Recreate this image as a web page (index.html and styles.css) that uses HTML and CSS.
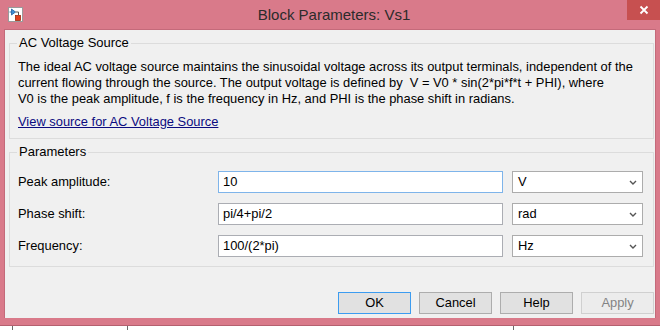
FILE: index.html
```html
<!DOCTYPE html>
<html>
<head>
<meta charset="utf-8">
<title>Block Parameters: Vs1</title>
<link rel="stylesheet" href="styles.css">
</head>
<body>
<div class="window">
  <div class="titlebar">
    <div class="tb-left">
      <svg class="app-icon" width="15" height="15" viewBox="0 0 15 15">
        <rect x="0.5" y="0.5" width="14" height="14" fill="#ffffff" stroke="#9a9a9a"/>
        <line x1="1.5" y1="5" x2="3.5" y2="5" stroke="#2a6fb8" stroke-width="1"/>
        <polygon points="3.5,2 7.5,5 3.5,8" fill="#3d8fd6" stroke="#1f5f9f" stroke-width="0.8"/>
        <polyline points="7.5,5 10.5,5 10.5,8" fill="none" stroke="#555" stroke-width="1"/>
        <rect x="7.5" y="8.5" width="5" height="5" fill="#e0401f" stroke="#a02a10" stroke-width="0.8"/>
      </svg>
    </div>
    <div class="title">Block Parameters: Vs1</div>
    <div class="tb-right">
      <div class="close">
        <svg width="10" height="10" viewBox="0 0 10 10"><path d="M1.5 1.5 L8.5 8.5 M8.5 1.5 L1.5 8.5" stroke="#ffffff" stroke-width="1.8"/></svg>
      </div>
    </div>
  </div>
  <div class="client">
    <fieldset class="group group-desc">
      <legend>AC Voltage Source</legend>
      <p class="desc">The ideal AC voltage source maintains the sinusoidal voltage across its output terminals, independent of the<br>current flowing through the source. The output voltage is defined by&nbsp; V = V0 * sin(2*pi*f*t + PHI), where<br>V0 is the peak amplitude, f is the frequency in Hz, and PHI is the phase shift in radians.</p>
      <a class="link" href="#">View source for AC Voltage Source</a>
    </fieldset>
    <fieldset class="group group-params">
      <legend>Parameters</legend>
      <div class="params">
        <label class="plabel">Peak amplitude:</label>
        <div class="field focused">10</div>
        <div class="combo"><span>V</span><svg class="chev" width="8" height="5" viewBox="0 0 8 5"><path d="M1 1 L4 4 L7 1" fill="none" stroke="#555" stroke-width="1.4"/></svg></div>

        <label class="plabel">Phase shift:</label>
        <div class="field">pi/4+pi/2</div>
        <div class="combo"><span>rad</span><svg class="chev" width="8" height="5" viewBox="0 0 8 5"><path d="M1 1 L4 4 L7 1" fill="none" stroke="#555" stroke-width="1.4"/></svg></div>

        <label class="plabel">Frequency:</label>
        <div class="field">100/(2*pi)</div>
        <div class="combo"><span>Hz</span><svg class="chev" width="8" height="5" viewBox="0 0 8 5"><path d="M1 1 L4 4 L7 1" fill="none" stroke="#555" stroke-width="1.4"/></svg></div>
      </div>
    </fieldset>
    <div class="buttons">
      <div class="btn btn-default">OK</div>
      <div class="btn">Cancel</div>
      <div class="btn">Help</div>
      <div class="btn btn-disabled">Apply</div>
    </div>
  </div>
</div>
<div class="below">
  <div class="seg seg1"></div>
  <div class="seg seg2"></div>
  <div class="seg seg3"></div>
</div>
</body>
</html>
```

FILE: styles.css
```css
* { box-sizing: border-box; }
html, body { margin: 0; padding: 0; }
body {
  width: 660px;
  height: 330px;
  overflow: hidden;
  background: #ffffff;
  font-family: "Liberation Sans", Arial, sans-serif;
  font-size: 12.9px;
  color: #000;
}
.window {
  width: 660px;
  height: 326px;
  background: #d97a8a;
  border-bottom: 1px solid #b5606f;
  display: flex;
  flex-direction: column;
}
.titlebar {
  height: 29px;
  display: grid;
  grid-template-columns: 1fr auto 1fr;
  align-items: start;
}
.tb-left { padding: 7px 0 0 8px; display: flex; }
.app-icon { display: block; }
.title {
  font-size: 15px;
  line-height: 20px;
  padding-top: 5px;
  padding-left: 8px;
  color: #2b2b2b;
  white-space: nowrap;
}
.tb-right { display: flex; justify-content: flex-end; }
.close {
  width: 33px;
  height: 20px;
  background: #c75050;
  display: flex;
  align-items: center;
  justify-content: center;
}
.client {
  margin-left: 4px;
  width: 652px;
  height: 289px;
  background: #f0f0f0;
  border: 1px solid #c46a7a;
  border-bottom: none;
  padding: 0 1px 0 4px;
  display: flex;
  flex-direction: column;
}
.group {
  margin: 5px 0 0 0;
  border: 1px solid #dcdcdc;
  padding: 8px 10px 8px 8px;
  min-width: 0;
}
.group legend {
  padding: 0 2px;
  margin-left: -1px;
  line-height: 16px;
  font-size: 13px;
  color: #000;
}
.desc {
  margin: 0;
  line-height: 16px;
  white-space: nowrap;
}
.link {
  display: block;
  margin-top: 7px;
  line-height: 16px;
  color: #0b0b80;
  text-decoration: underline;
}
.group-params { padding-top: 11px; padding-bottom: 9px; }
.params {
  display: grid;
  grid-template-columns: 191px 285px 131px;
  column-gap: 9px;
  row-gap: 10px;
  align-items: center;
}
.plabel { line-height: 22px; }
.field {
  height: 22px;
  background: #fff;
  border: 1px solid #abadb3;
  padding: 0 4px;
  line-height: 20px;
}
.field.focused { border-color: #7eb4ea; }
.combo {
  height: 22px;
  background: #fff;
  border: 1px solid #acacac;
  padding: 0 5px 0 5px;
  line-height: 20px;
  display: flex;
  align-items: center;
  justify-content: space-between;
}
.chev { display: block; }
.buttons {
  margin-top: 25px;
  display: flex;
  justify-content: flex-end;
  gap: 8px;
}
.btn {
  width: 73px;
  height: 22px;
  border: 1px solid #adadad;
  background: #e1e1e1;
  text-align: center;
  line-height: 20px;
  color: #000;
}
.btn-default { border-color: #3c9cf0; }
.btn-disabled {
  color: #838383;
  border-color: #d0d0d0;
  background: #ececec;
}
.below {
  height: 4px;
  display: flex;
  padding-left: 12px;
}
.seg { height: 4px; border-left: 1px solid #6b6b6b; }
.seg1 { width: 115px; }
.seg2 { width: 386px; }
.seg3 { flex: 1; }
```
